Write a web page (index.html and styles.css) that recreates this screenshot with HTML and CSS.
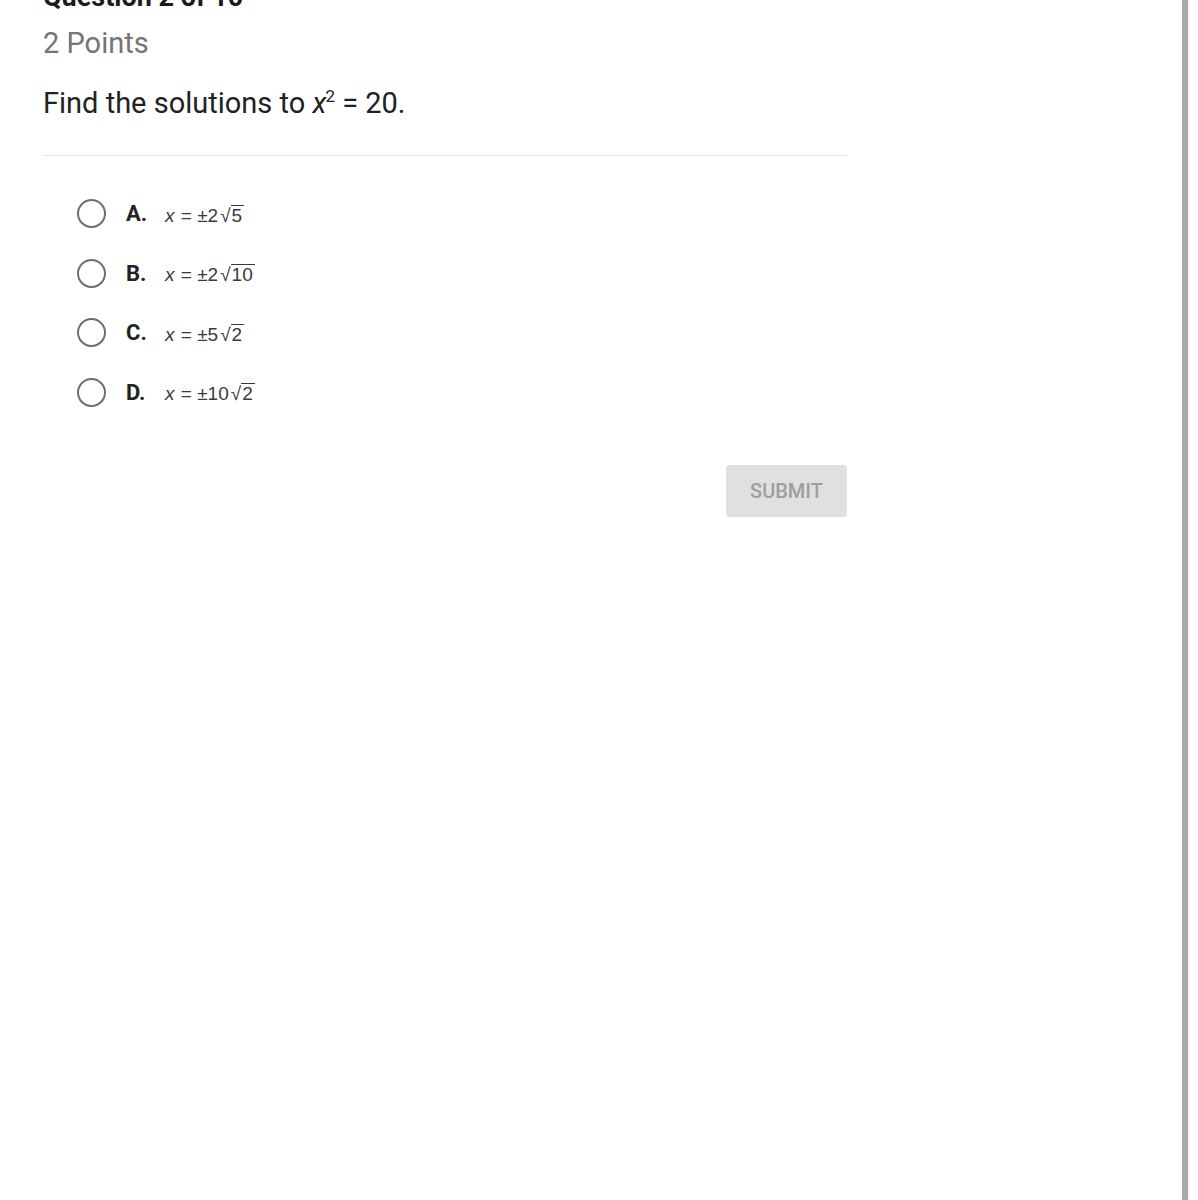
FILE: index.html
```html
<!DOCTYPE html>
<html lang="en">
<head>
    <meta charset="UTF-8">
    <meta name="viewport" content="width=device-width, initial-scale=1.0">
    <title>Question 2 of 10</title>
    <link rel="stylesheet" href="styles.css">
</head>
<body>
    <div class="page">
        <div class="quiz">
            <div class="quiz-card">
                <h1 class="quiz-title">Question 2 of 10</h1>
                <p class="quiz-points">2 Points</p>
                <p class="quiz-question">Find the solutions to <i>x</i><sup>2</sup> = 20.</p>
                <hr class="divider">

                <form class="options">
                    <label class="option">
                        <input type="radio" name="answer" value="A">
                        <span class="option-letter">A.</span>
                        <span class="math"><i>x</i> = ±2<span class="radical">√</span><span class="radicand">5</span></span>
                    </label>
                    <label class="option">
                        <input type="radio" name="answer" value="B">
                        <span class="option-letter">B.</span>
                        <span class="math"><i>x</i> = ±2<span class="radical">√</span><span class="radicand">10</span></span>
                    </label>
                    <label class="option">
                        <input type="radio" name="answer" value="C">
                        <span class="option-letter">C.</span>
                        <span class="math"><i>x</i> = ±5<span class="radical">√</span><span class="radicand">2</span></span>
                    </label>
                    <label class="option">
                        <input type="radio" name="answer" value="D">
                        <span class="option-letter">D.</span>
                        <span class="math"><i>x</i> = ±10<span class="radical">√</span><span class="radicand">2</span></span>
                    </label>
                </form>

                <div class="actions">
                    <button type="button" class="btn-submit" disabled>SUBMIT</button>
                </div>
            </div>
        </div>
        <div class="rail"></div>
        <div class="page-edge"></div>
    </div>
</body>
</html>
```

FILE: styles.css
```css
* {
    margin: 0;
    padding: 0;
    box-sizing: border-box;
}

:root {
    --text: #222222;
    --muted: #757575;
    --line: #e3e3e3;
    --radio: #6e6e6e;
    --btn-bg: #e0e0e0;
    --btn-text: #9e9e9e;
}

body {
    font-family: Roboto, 'Noto Sans', sans-serif;
    background: #ffffff;
    color: var(--text);
    overflow: hidden;
}

.page {
    display: flex;
    min-height: 100vh;
}

.quiz {
    flex: 1;
    padding-left: 43px;
}

.quiz-card {
    width: 804px;
}

.quiz-title {
    font-size: 27px;
    font-weight: 700;
    line-height: 30px;
    margin-top: -18px;
    color: #1c1c1c;
}

.quiz-points {
    font-size: 29px;
    line-height: 34px;
    margin-top: 14px;
    color: var(--muted);
}

.quiz-question {
    font-size: 29px;
    line-height: 34px;
    margin-top: 26px;
    color: var(--text);
}

.quiz-question sup {
    font-size: 17px;
    line-height: 0;
    margin-left: -1px;
}

.divider {
    border: none;
    border-top: 1px solid var(--line);
    margin-top: 35px;
}

.options {
    display: flex;
    flex-direction: column;
    margin-top: 28px;
    padding-left: 34px;
}

.option {
    display: flex;
    align-items: center;
    height: 59.5px;
    cursor: pointer;
}

.option input {
    appearance: none;
    -webkit-appearance: none;
    width: 29px;
    height: 29px;
    border: 2.5px solid var(--radio);
    border-radius: 50%;
    margin: 0 20px 0 0;
    background: #ffffff;
    flex-shrink: 0;
}

.option-letter {
    width: 39px;
    font-size: 22px;
    font-weight: 700;
    color: var(--text);
}

.math {
    font-family: 'Liberation Sans', Arial, sans-serif;
    font-size: 19px;
    color: #3a3a3a;
    display: inline-flex;
    align-items: baseline;
    white-space: pre;
    padding-top: 4px;
}

.math i {
    font-style: italic;
    margin-right: 1px;
}

.radical {
    margin-left: 2px;
}

.radicand {
    border-top: 1px solid #3a3a3a;
    line-height: 19px;
    padding: 0 2px 0 1px;
}

.actions {
    display: flex;
    justify-content: flex-end;
    margin-top: 43px;
}

.btn-submit {
    width: 121px;
    height: 52px;
    border: none;
    border-radius: 4px;
    background: var(--btn-bg);
    color: var(--btn-text);
    font-family: Roboto, sans-serif;
    font-size: 20px;
    font-weight: 500;
}

.rail {
    width: 6px;
    background: #a9a9a9;
}

.page-edge {
    width: 10px;
    border-left: 1px solid #f0f0f0;
}
```
